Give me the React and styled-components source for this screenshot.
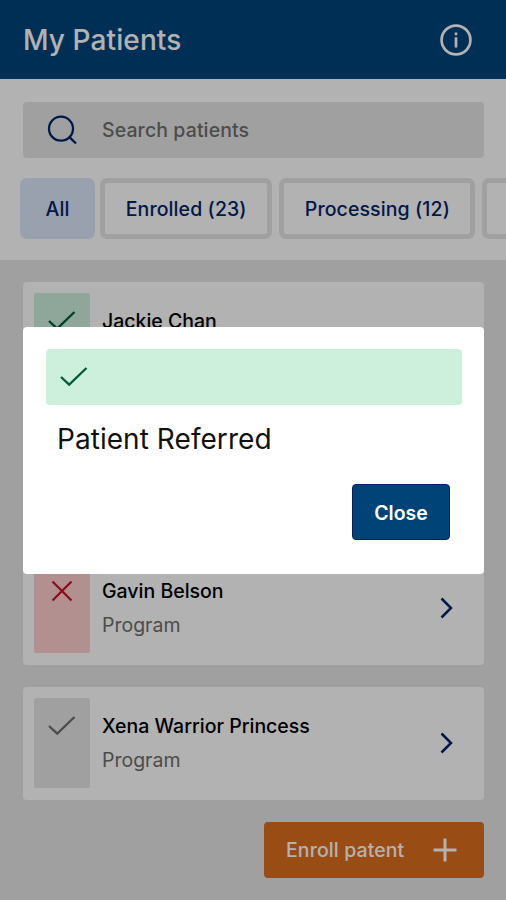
import React from 'react';
import styled, {createGlobalStyle} from 'styled-components';

const GlobalStyle = createGlobalStyle`
  * {
    box-sizing: border-box;
  }

  body {
    margin: 0;
    overflow: hidden;
    font-family: Inter, 'Liberation Sans', sans-serif;
  }

  button {
    font-family: inherit;
  }
`;

const Screen = styled.div`
  position: relative;
  display: flex;
  flex-direction: column;
  width: 506px;
  height: 900px;
  overflow: hidden;
  background: #e6e6e6;
`;

const Header = styled.header`
  display: flex;
  align-items: center;
  justify-content: space-between;
  flex: none;
  height: 78.5px;
  padding: 1px 33px 0 23px;
  background: #00447a;
  color: #fff;
`;

const Title = styled.h1`
  margin: 0;
  font-size: 28px;
  font-weight: 500;
  line-height: 34px;
  letter-spacing: 0.1px;
`;

const Filters = styled.section`
  flex: none;
  height: 181px;
  padding-top: 23px;
  background: #fff;
`;

const SearchBox = styled.div`
  display: flex;
  align-items: center;
  gap: 24px;
  height: 56px;
  margin: 0 22px 0 23px;
  padding-left: 24px;
  border-radius: 4px;
  background: #e6e6e6;
  color: #6e6e6e;
  font-size: 19.5px;
  font-weight: 500;
  letter-spacing: 0.1px;
`;

const Chips = styled.div`
  display: flex;
  margin: 20.5px 0 0 20px;
`;

const Chip = styled.button`
  flex: none;
  width: ${props => props.$width}px;
  height: 61px;
  margin-right: ${props => (props.$active ? 5 : 7)}px;
  padding: 0;
  border: 5px solid ${props => (props.$active ? '#dbe5fa' : '#e6e6e6')};
  border-radius: 7px;
  background: ${props => (props.$active ? '#dbe5fa' : '#fff')};
  color: #00246b;
  font-size: 19.5px;
  font-weight: 500;
  letter-spacing: 0.1px;
`;

const PatientList = styled.main`
  display: flex;
  flex-direction: column;
  gap: 22.5px;
  padding: 22.5px 22px 0 23px;
`;

const Card = styled.article`
  display: flex;
  height: 112.5px;
  padding: 11.25px;
  border-radius: 4px;
  background: #fff;
`;

const tones = {
  success: {background: '#cdf0dd', color: '#005c38'},
  danger: {background: '#ffcece', color: '#cc1429'},
  neutral: {background: '#e6e6e6', color: '#6e6e6e'}
};

const Status = styled.div`
  display: flex;
  justify-content: center;
  flex: none;
  width: 56px;
  height: 90px;
  padding-top: 11px;
  border-radius: 2px;
  background: ${props => tones[props.$tone].background};
  color: ${props => tones[props.$tone].color};
`;

const Details = styled.div`
  flex: 1;
  padding: 11px 0 0 11.75px;
  font-size: 19.5px;
  line-height: 34px;
`;

const Name = styled.div`
  color: #000;
  font-weight: 500;
`;

const Program = styled.div`
  color: #6e6e6e;
`;

const Arrow = styled.div`
  display: flex;
  align-items: center;
  padding-right: 10px;
  color: #00246b;
`;

const EnrollButton = styled.button`
  display: flex;
  align-items: center;
  justify-content: space-between;
  align-self: flex-end;
  width: 220px;
  height: 56px;
  padding: 0 22px;
  border: 0;
  border-radius: 4px;
  background: #dc6d1c;
  color: #fff;
  font-size: 19.5px;
  font-weight: 500;
  letter-spacing: 0.1px;
`;

const Backdrop = styled.div`
  position: absolute;
  inset: 0;
  display: flex;
  justify-content: center;
  align-items: center;
  padding-left: 1px;
  padding-top: 1px;
  background: rgba(0, 0, 0, 0.3);
`;

const Dialog = styled.div`
  display: flex;
  flex-direction: column;
  width: 461px;
  height: 247.5px;
  padding: 22.5px;
  border-radius: 4px;
  background: #fff;
`;

const Banner = styled.div`
  display: flex;
  align-items: center;
  height: 56px;
  padding-left: 11px;
  border-radius: 4px;
  background: #cdf0dd;
  color: #005c38;
`;

const Message = styled.div`
  margin: 16.5px 0 0 11.5px;
  color: #111;
  font-size: 28px;
  line-height: 34px;
  letter-spacing: 0.05px;
`;

const CloseButton = styled.button`
  align-self: flex-end;
  width: 98px;
  height: 56px;
  margin: 28.5px 11.5px 0 0;
  padding: 1px 0 0;
  border: 1px solid #001f66;
  border-radius: 4px;
  background: #004377;
  color: #fff;
  font-size: 19.5px;
  font-weight: 600;
`;

const Stroke = styled.svg`
  display: block;
  flex: none;
  fill: none;
  stroke: currentColor;
  stroke-width: ${props => props.$weight || 2.3};
`;

const CheckIcon = () => (
  <Stroke width="34" height="34" viewBox="0 0 34 34">
    <path d="M4 17L12.2 24.7L29.5 8" />
  </Stroke>
);

const CrossIcon = () => (
  <Stroke width="34" height="34" viewBox="0 0 34 34">
    <path d="M7.5 7.5L26.5 26.5M26.5 7.5L7.5 26.5" />
  </Stroke>
);

const SearchIcon = () => (
  <Stroke width="31" height="34" viewBox="0 0 31 34" color="#00246b">
    <circle cx="14" cy="15.7" r="12" />
    <path d="M22.4 24.1L29 30.5" />
  </Stroke>
);

const InfoIcon = () => (
  <Stroke width="34" height="34" viewBox="0 0 34 34" $weight={2.7}>
    <circle cx="17" cy="17" r="14.4" />
    <path d="M17 9.5V12.3M17 14.3V24.5" />
  </Stroke>
);

const ChevronIcon = () => (
  <Stroke width="34" height="34" viewBox="0 0 34 34" $weight={2.5}>
    <path d="M12.5 7.5L22 17L12.5 26.5" />
  </Stroke>
);

const PlusIcon = () => (
  <Stroke width="34" height="34" viewBox="0 0 34 34" $weight={3}>
    <path d="M17 5.5V28.5M5.5 17H28.5" />
  </Stroke>
);

const filters = [
  {label: 'All', width: 75, active: true},
  {label: 'Enrolled (23)', width: 172.4},
  {label: 'Processing (12)', width: 196},
  {label: '', width: 120}
];

const patients = [
  {id: 1, name: 'Jackie Chan', tone: 'success'},
  {id: 2, tone: 'success'},
  {id: 3, name: 'Gavin Belson', program: 'Program', tone: 'danger'},
  {id: 4, name: 'Xena Warrior Princess', program: 'Program', tone: 'neutral'}
];

const PatientCard = ({name, program, tone}) => (
  <Card>
    <Status $tone={tone}>{tone === 'danger' ? <CrossIcon /> : <CheckIcon />}</Status>
    <Details>
      <Name>{name}</Name>
      <Program>{program}</Program>
    </Details>
    <Arrow>
      <ChevronIcon />
    </Arrow>
  </Card>
);

const App = () => (
  <>
    <GlobalStyle />
    <Screen>
      <Header>
        <Title>My Patients</Title>
        <InfoIcon />
      </Header>
      <Filters>
        <SearchBox>
          <SearchIcon />
          Search patients
        </SearchBox>
        <Chips>
          {filters.map(f => (
            <Chip key={f.width} $width={f.width} $active={f.active}>
              {f.label}
            </Chip>
          ))}
        </Chips>
      </Filters>
      <PatientList>
        {patients.map(p => (
          <PatientCard key={p.id} {...p} />
        ))}
        <EnrollButton>
          Enroll patent
          <PlusIcon />
        </EnrollButton>
      </PatientList>
      <Backdrop>
        <Dialog>
          <Banner>
            <CheckIcon />
          </Banner>
          <Message>Patient Referred</Message>
          <CloseButton>Close</CloseButton>
        </Dialog>
      </Backdrop>
    </Screen>
  </>
);

export default App;
